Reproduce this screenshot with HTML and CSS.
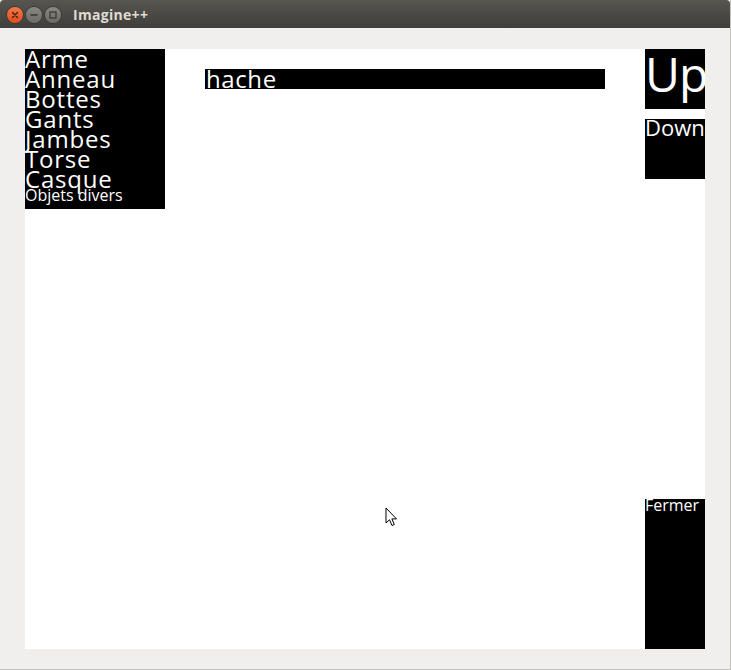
FILE: index.html
```html
<!DOCTYPE html>
<html>
<head>
<meta charset="utf-8">
<link rel="stylesheet" href="styles.css">
</head>
<body>
<div class="window">
  <div class="titlebar">
    <div class="btn close">
      <svg width="16" height="16" viewBox="0 0 16 16"><path d="M5.5 5.5 L10.5 10.5 M10.5 5.5 L5.5 10.5" stroke="#3a2019" stroke-width="1.4" stroke-linecap="round"/></svg>
    </div>
    <div class="btn">
      <svg width="16" height="16" viewBox="0 0 16 16"><path d="M4.5 8 H11.5" stroke="#3b3a36" stroke-width="1.6"/></svg>
    </div>
    <div class="btn">
      <svg width="16" height="16" viewBox="0 0 16 16"><rect x="5" y="5" width="6" height="6" fill="none" stroke="#3b3a36" stroke-width="1.3"/></svg>
    </div>
    <div class="title">Imagine++</div>
  </div>
  <div class="content">
    <div class="canvas">
      <div class="list">
        <div class="item">Arme</div>
        <div class="item">Anneau</div>
        <div class="item">Bottes</div>
        <div class="item">Gants</div>
        <div class="item">Jambes</div>
        <div class="item">Torse</div>
        <div class="item">Casque</div>
        <div class="item small">Objets divers</div>
      </div>
      <div class="middle">
        <div class="field">hache</div>
      </div>
      <div class="side">
        <div class="box up">Up</div>
        <div class="box down">Down</div>
        <div class="box fermer">Fermer</div>
      </div>
      <svg class="cursor" width="14" height="22" viewBox="0 0 14 22"><path d="M1 1 L1 16 L4.5 12.8 L7 18.5 L9.3 17.5 L6.9 11.9 L11.5 11.9 Z" fill="#fff" stroke="#000" stroke-width="1" stroke-linejoin="round"/></svg>
    </div>
  </div>
</div>
</body>
</html>
```
FILE: styles.css
```css
html, body {
  margin: 0;
  padding: 0;
  background: #f0efed;
}
.window {
  width: 731px;
  height: 670px;
  box-sizing: border-box;
  border-right: 1px solid #c2c1bd;
  border-bottom: 1px solid #c2c1bd;
  background: #f0efed;
  display: flex;
  flex-direction: column;
}
.titlebar {
  height: 28px;
  flex: none;
  background: linear-gradient(#575550, #3f3e3a);
  border-radius: 4px 4px 0 0;
  display: flex;
  align-items: center;
  padding-left: 7px;
  gap: 3px;
  box-sizing: border-box;
  padding-top: 2px;
}
.btn {
  width: 16px;
  height: 16px;
  border-radius: 50%;
  background: linear-gradient(#888780, #6c6b65);
  box-shadow: 0 0 0 1px #3a3935;
  display: flex;
}
.btn.close {
  background: linear-gradient(#f7784a, #e24a1c);
}
.title {
  margin-left: 9px;
  font-family: "Open Sans", "DejaVu Sans", sans-serif;
  font-weight: 700;
  font-size: 14px;
  letter-spacing: 0.3px;
  color: #dfdbd2;
  line-height: 16px;
}
.content {
  flex: 1;
  padding: 21px 0 0 25px;
}
.canvas {
  position: relative;
  width: 680px;
  height: 600px;
  background: #fff;
  display: flex;
  font-family: "Open Sans", "DejaVu Sans", sans-serif;
  color: #fff;
}
.list {
  width: 140px;
  height: 160px;
  background: #000;
  overflow: hidden;
}
.item {
  font-size: 24px;
  line-height: 20px;
  height: 20px;
  letter-spacing: 0.8px;
  white-space: nowrap;
}
.item.small {
  font-size: 16px;
  line-height: 12px;
  letter-spacing: 0;
}
.middle {
  width: 400px;
  margin: 20px 40px 0;
}
.field {
  height: 20px;
  background: #000;
  font-size: 24px;
  line-height: 20px;
  letter-spacing: 0.6px;
  padding-left: 1px;
}
.side {
  width: 60px;
  display: flex;
  flex-direction: column;
  gap: 10px;
}
.box {
  width: 60px;
  background: #000;
  overflow: hidden;
  white-space: nowrap;
}
.up {
  height: 60px;
  font-size: 48px;
  line-height: 49px;
  letter-spacing: -1px;
}
.down {
  height: 60px;
  font-size: 22px;
  line-height: 17px;
}
.fermer {
  height: 150px;
  margin-top: auto;
  font-size: 16px;
  line-height: 12px;
}
.cursor {
  position: absolute;
  left: 360px;
  top: 458px;
}
```
